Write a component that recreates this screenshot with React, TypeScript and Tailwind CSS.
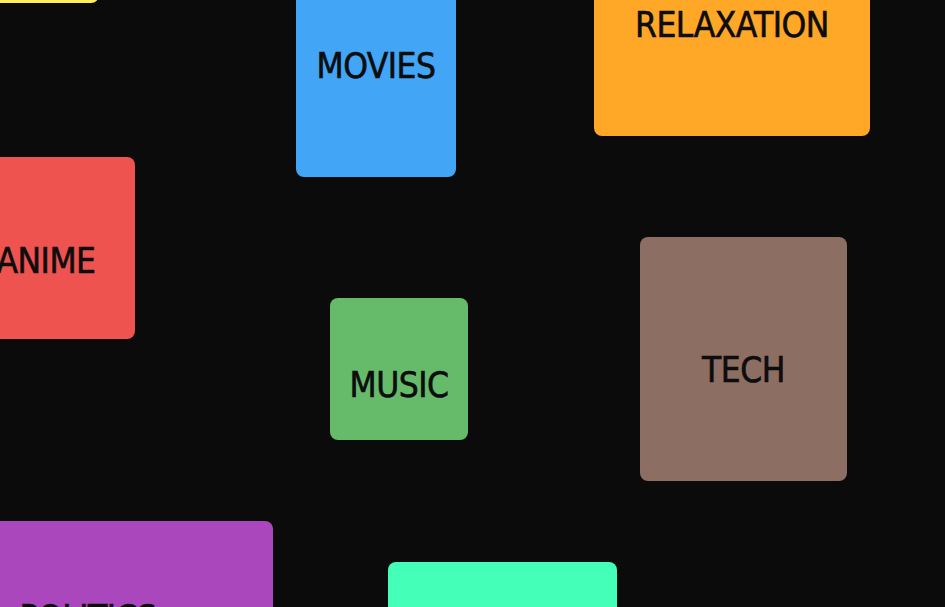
type Topic = {
  label: string;
  className: string;
  textClassName?: string;
};

// positions are the content here: cards scattered over a canvas
const TOPICS: Topic[] = [
  { label: "", className: "left-[-60px] top-[-147px] w-[159px] h-[150px] bg-[#ffee58]" },
  { label: "MOVIES", className: "left-[296px] top-[-45px] w-[160px] h-[222px] bg-[#42a5f5]" },
  { label: "RELAXATION", className: "left-[594px] top-[-86px] w-[276px] h-[222px] bg-[#ffa726]" },
  { label: "ANIME", className: "left-[-43px] top-[157px] w-[178px] h-[182px] bg-[#ef5350]", textClassName: "pt-[26px]" },
  { label: "MUSIC", className: "left-[330px] top-[298px] w-[138px] h-[142px] bg-[#66bb6a]", textClassName: "pt-[32px]" },
  { label: "TECH", className: "left-[640px] top-[237px] w-[207px] h-[244px] bg-[#8d6e63]", textClassName: "pt-[22px]" },
  { label: "POLITICS", className: "left-[-97px] top-[521px] w-[370px] h-[170px] bg-[#ab47bc]", textClassName: "pt-[24px]" },
  { label: "", className: "left-[388px] top-[562px] w-[229px] h-[200px] bg-[#43ffb7]" },
];

export default function App() {
  return (
    <div className="relative h-[607px] w-full overflow-hidden bg-[#0b0b0b]">
      {TOPICS.map((topic, i) => (
        <div
          key={i}
          className={`absolute flex items-center justify-center rounded-lg ${topic.className}`}
        >
          <span
            className={`font-['DejaVu_Sans_Condensed','DejaVu_Sans',sans-serif] text-[35px] leading-none font-normal tracking-[-0.5px] text-[#0d0d0d] [-webkit-text-stroke:0.6px_#0d0d0d] ${topic.textClassName ?? ""}`}
          >
            {topic.label}
          </span>
        </div>
      ))}
    </div>
  );
}
